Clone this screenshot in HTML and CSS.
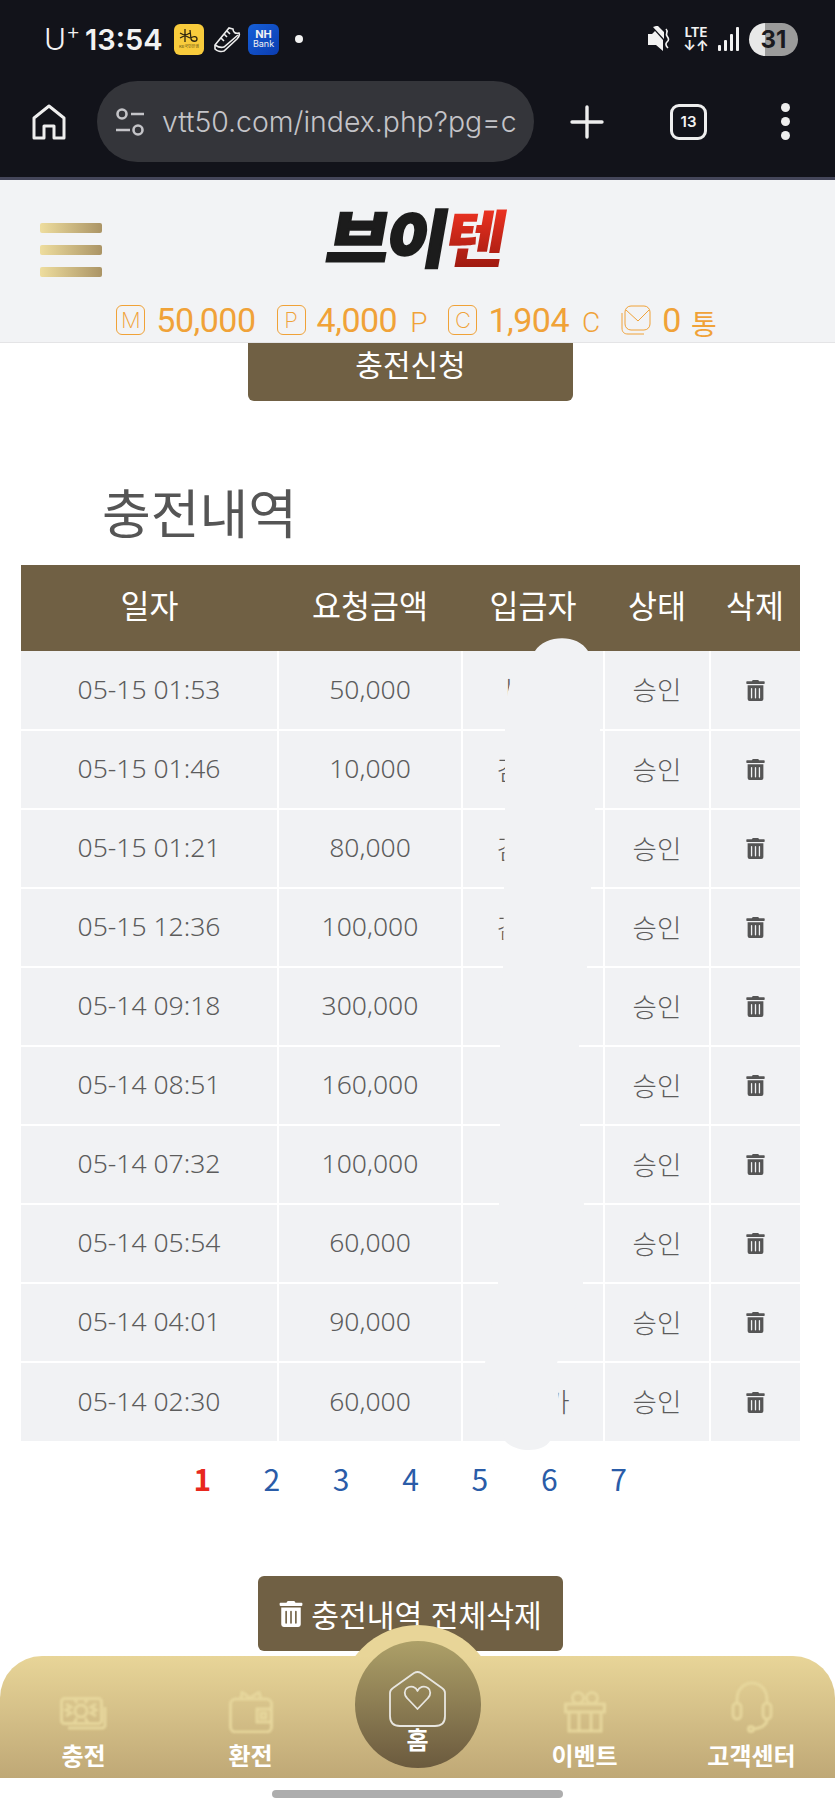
FILE: index.html
```html
<!DOCTYPE html>
<html lang="ko">

<head>
  <meta charset="UTF-8">
  <meta name="viewport" content="width=device-width, initial-scale=1.0">
  <title>충전내역</title>
  <link rel="stylesheet" href="styles.css">
</head>

<body>
  <svg class="defs">
    <symbol id="trash" viewBox="0 0 448 512">
      <path fill="currentColor" d="M32 464a48 48 0 0 0 48 48h288a48 48 0 0 0 48-48V128H32zm272-256a16 16 0 0 1 32 0v224a16 16 0 0 1-32 0zm-96 0a16 16 0 0 1 32 0v224a16 16 0 0 1-32 0zm-96 0a16 16 0 0 1 32 0v224a16 16 0 0 1-32 0zM432 32H312l-9.4-18.7A24 24 0 0 0 281.1 0H166.8a23.72 23.72 0 0 0-21.4 13.3L136 32H16A16 16 0 0 0 0 48v32a16 16 0 0 0 16 16h416a16 16 0 0 0 16-16V48a16 16 0 0 0-16-16z" />
    </symbol>
  </svg>

  <!-- phone status bar + browser toolbar -->
  <div class="chrome">
    <div class="status-bar">
      <span class="carrier">U<sup>+</sup></span>
      <span class="clock">13:54</span>
      <span class="app-kb">
        <svg width="20" height="14" viewBox="0 0 20 14" fill="none" stroke="#2b2410" stroke-width="1.3">
          <path d="M1 4l10 5M1 9l10-5M6 0v13M11 1l1 9c1 3 6 3 6 0s-4-3-6-1" />
        </svg>
        <small>KB국민은행</small>
      </span>
      <svg class="app-shoe" width="28" height="28" viewBox="0 0 28 28" fill="none" stroke="#eee" stroke-width="1.6">
        <path d="M2 20L16 3l4 1c0 3 2 5 6 4 1 2 0 4-2 6L11 26c-3 1-7 0-9-2z" />
        <path d="M2 20c3 2 6 3 9 2L25 10M11 9l3 3M14 6l3 3M8 13l3 3" />
      </svg>
      <span class="app-nh"><b>NH</b><small>Bank</small></span>
      <span class="dot"></span>

      <div class="status-right">
        <svg width="22" height="26" viewBox="0 0 22 26" fill="#f2f2f2">
          <path d="M0 8h4l3-3 8 9v11l-7-6H0zM5 1l11 12v-7L10 0H8z" />
          <path d="M18 3c3 3-1 4 1 7s2 4 0 6-1 4 1 6" fill="none" stroke="#f2f2f2" stroke-width="1.6" />
        </svg>
        <span class="lte">LTE<i>↓↑</i></span>
        <svg width="22" height="24" viewBox="0 0 22 24" fill="#f2f2f2">
          <rect x="0" y="18" width="3" height="6" rx="1" />
          <rect x="6" y="13" width="3" height="11" rx="1" />
          <rect x="12" y="7" width="3" height="17" rx="1" />
          <rect x="18" y="0" width="3" height="24" rx="1" />
        </svg>
        <span class="battery">31</span>
      </div>
    </div>

    <div class="toolbar">
      <svg class="tool-home" width="34" height="36" viewBox="0 0 34 36" fill="none" stroke="#eee" stroke-width="3">
        <path d="M2 34V14L17 2l15 12v20H22V22H12v12z" stroke-linejoin="round" />
      </svg>
      <div class="url-bar">
        <svg width="30" height="30" viewBox="0 0 30 30" fill="none" stroke="#c4c4c8" stroke-width="2.6">
          <circle cx="7" cy="7" r="4.5" />
          <circle cx="23" cy="23" r="4.5" />
          <path d="M16 7h13M1 23h14" />
        </svg>
        <span>vtt50.com/index.php?pg=c</span>
      </div>
      <svg class="tool-plus" width="34" height="34" viewBox="0 0 34 34" stroke="#eee" stroke-width="3.4" stroke-linecap="round">
        <path d="M17 2v30M2 17h30" />
      </svg>
      <span class="tab-count">13</span>
      <span class="tool-more"><i></i><i></i><i></i></span>
    </div>
  </div>

  <header class="site-header">
    <div class="header-top">
      <div class="hamburger"><span></span><span></span><span></span></div>
      <div class="logo">브이<span>텐</span></div>
    </div>
    <div class="points">
      <div class="point">
        <span class="point-box">M</span>
        <b>50,000</b>
      </div>
      <div class="point">
        <span class="point-box">P</span>
        <b>4,000</b><em>P</em>
      </div>
      <div class="point">
        <span class="point-box">C</span>
        <b>1,904</b><em>C</em>
      </div>
      <div class="point">
        <svg width="30" height="30" viewBox="0 0 30 30" fill="none" stroke="#f0a238" stroke-width="1">
          <rect x="4" y="1" width="25" height="24" rx="6" />
          <path d="M5 5l12 11L28 5" />
          <path d="M1 8v15c0 4 2 6 6 6h16" />
        </svg>
        <b>0</b><em class="unit">통</em>
      </div>
    </div>
  </header>

  <main>
    <div class="request-wrap">
      <button class="request-btn">충전신청</button>
    </div>

    <h2 class="page-title">충전내역</h2>

    <div class="history">
      <table>
        <thead>
          <tr>
            <th class="col-date">일자</th>
            <th class="col-amount">요청금액</th>
            <th class="col-name">입금자</th>
            <th class="col-state">상태</th>
            <th class="col-del">삭제</th>
          </tr>
        </thead>
        <tbody>
          <tr><td>05-15 01:53</td><td>50,000</td><td>ㅣㅇㅇ</td><td>승인</td><td><svg class="trash"><use href="#trash" /></svg></td></tr>
          <tr><td>05-15 01:46</td><td>10,000</td><td>김ㅇㅇ</td><td>승인</td><td><svg class="trash"><use href="#trash" /></svg></td></tr>
          <tr><td>05-15 01:21</td><td>80,000</td><td>김ㅇㅇ</td><td>승인</td><td><svg class="trash"><use href="#trash" /></svg></td></tr>
          <tr><td>05-15 12:36</td><td>100,000</td><td>김ㅇㅇ</td><td>승인</td><td><svg class="trash"><use href="#trash" /></svg></td></tr>
          <tr><td>05-14 09:18</td><td>300,000</td><td></td><td>승인</td><td><svg class="trash"><use href="#trash" /></svg></td></tr>
          <tr><td>05-14 08:51</td><td>160,000</td><td></td><td>승인</td><td><svg class="trash"><use href="#trash" /></svg></td></tr>
          <tr><td>05-14 07:32</td><td>100,000</td><td></td><td>승인</td><td><svg class="trash"><use href="#trash" /></svg></td></tr>
          <tr><td>05-14 05:54</td><td>60,000</td><td></td><td>승인</td><td><svg class="trash"><use href="#trash" /></svg></td></tr>
          <tr><td>05-14 04:01</td><td>90,000</td><td></td><td>승인</td><td><svg class="trash"><use href="#trash" /></svg></td></tr>
          <tr><td>05-14 02:30</td><td>60,000</td><td>ㅇㅇ가</td><td>승인</td><td><svg class="trash"><use href="#trash" /></svg></td></tr>
        </tbody>
      </table>

      <!-- painted-over names in the depositor column -->
      <svg class="smear" viewBox="0 0 779 900" width="779" height="900">
        <path fill="#f1f2f4" d="M484 166C484 130 486 108 514 86C524 70 556 68 567 86C578 100 580 130 579 166L574 244L566 403L558 482L559 561L563 640L562 719L536 798L538 840L529 876C522 888 495 888 484 876L464 798L477 719L478 640L479 561L479 482L482 403L484 244Z" />
      </svg>
    </div>

    <nav class="pagination">
      <a class="current">1</a>
      <a>2</a>
      <a>3</a>
      <a>4</a>
      <a>5</a>
      <a>6</a>
      <a>7</a>
    </nav>

    <div class="delete-wrap">
      <button class="delete-btn"><svg class="trash-lg"><use href="#trash" /></svg>충전내역 전체삭제</button>
    </div>
  </main>

  <!-- bottom tab bar -->
  <div class="tabbar">
    <a class="tab">
      <svg class="tab-icon" width="48" height="36" viewBox="0 0 48 36" fill="none" stroke-width="3">
        <path d="M8 31h34a3 3 0 0 0 3-3V10" />
        <rect x="1.500" y="1.500" width="40" height="25" rx="3" />
        <circle cx="21" cy="14" r="6" />
        <path d="M6 7l5 3-5 3 5 3-5 3M36 7l-5 3 5 3-5 3 5 3M14 1l3 5M28 1l-3 5M14 26l3-5M28 26l-3-5" />
      </svg>
      <span>충전</span>
    </a>
    <a class="tab">
      <svg class="tab-icon" width="44" height="42" viewBox="0 0 44 42" fill="none" stroke-width="3">
        <rect x="1.500" y="8" width="41" height="33" rx="5" />
        <path d="M12 8L13 1l8 6 9-6 2 7" />
        <rect x="28" y="18" width="14" height="13" />
        <rect x="32" y="22" width="5" height="5" />
      </svg>
      <span>환전</span>
    </a>
    <a class="tab tab-home">
      <span class="home-circle">
        <svg width="57" height="56" viewBox="0 0 57 56" fill="none" stroke="#e8e6e0" stroke-width="1.8" stroke-linejoin="round">
          <path d="M1 22q0-3 3-5L25 2q3.500-2 7 0L53 17q3 2 3 5V45q0 10-10 10H11Q1 55 1 45z" />
          <path d="M28.500 38L18 27c-3-3-3-8 0-10 4-3 9-1 10.500 3 1.500-4 6.500-6 10.500-3 3 2 3 7 0 10z" />
        </svg>
        <span>홈</span>
      </span>
    </a>
    <a class="tab">
      <svg class="tab-icon" width="42" height="42" viewBox="0 0 42 42" fill="none" stroke-width="3">
        <circle cx="14" cy="7" r="5.500" />
        <circle cx="28" cy="7" r="5.500" />
        <rect x="1.500" y="13" width="39" height="8" />
        <path d="M5 21v19h32V21M15 21v19M27 21v19" />
      </svg>
      <span>이벤트</span>
    </a>
    <a class="tab">
      <svg class="tab-icon" width="42" height="52" viewBox="0 0 42 52" fill="none" stroke-width="3">
        <path d="M6 22V19C6 8 13 2 21 2s15 6 15 17v3" />
        <rect x="2" y="22" width="8" height="16" rx="4" />
        <rect x="32" y="22" width="8" height="16" rx="4" />
        <path d="M36 38c0 6-6 9-13 10" />
        <circle cx="20" cy="48" r="2.500" />
      </svg>
      <span>고객센터</span>
    </a>
  </div>
  <div class="home-indicator"></div>
</body>

</html>
```

FILE: styles.css
```css
* {
  box-sizing: border-box;
}

body {
  position: relative;
  width: 835px;
  height: 1809px;
  margin: 0;
  overflow: hidden;
  background-color: #fff;
  font-family: "Noto Sans CJK KR", "Noto Sans", sans-serif;
}

.defs {
  display: none;
}

/* ---- phone chrome ---- */
.chrome {
  height: 180px;
  background-color: #12131a;
  border-bottom: 3px solid #44465a;
  font-family: Inter, sans-serif;
  color: #f2f2f2;
}

.status-bar {
  display: flex;
  align-items: center;
  height: 72px;
  padding: 6px 37px 0 44px;
}

.carrier {
  width: 41px;
  font-size: 30px;
  font-weight: 300;
}

.carrier sup {
  font-size: 22px;
  line-height: 0;
}

.clock {
  width: 89px;
  font-size: 29px;
  font-weight: 600;
}

.app-kb {
  display: flex;
  flex-direction: column;
  align-items: center;
  justify-content: center;
  width: 30px;
  height: 31px;
  background-color: #f8cb3c;
  border-radius: 6px;
}

.app-kb small {
  font-size: 4px;
  line-height: 6px;
  color: #5a4a10;
  font-family: "Noto Sans CJK KR", sans-serif;
}

.app-shoe {
  margin: 0 7px 0 9px;
}

.app-nh {
  display: flex;
  flex-direction: column;
  align-items: center;
  justify-content: center;
  width: 31px;
  height: 31px;
  background: linear-gradient(135deg, #1660d8, #0b3cb0);
  border-radius: 6px;
  line-height: 10px;
}

.app-nh b {
  font-size: 11px;
  font-weight: 700;
}

.app-nh small {
  font-size: 9px;
}

.dot {
  width: 8px;
  height: 8px;
  margin-left: 16px;
  background-color: #f2f2f2;
  border-radius: 50%;
}

.status-right {
  display: flex;
  align-items: center;
  margin-left: auto;
}

.lte {
  display: flex;
  flex-direction: column;
  align-items: center;
  width: 26px;
  margin: 0 9px 0 13px;
  font-size: 13px;
  font-weight: 700;
  line-height: 13px;
}

.lte i {
  font-style: normal;
  font-size: 14px;
  line-height: 13px;
}

.battery {
  width: 49px;
  height: 33px;
  margin-left: 9px;
  background: linear-gradient(90deg, #e8e8e8 32%, #9b9b9b 32%);
  border-radius: 17px;
  color: #1a1a20;
  font-size: 24px;
  font-weight: 700;
  line-height: 33px;
  text-align: center;
}

.toolbar {
  display: flex;
  align-items: center;
  height: 99px;
  padding-left: 32px;
}

.url-bar {
  display: flex;
  align-items: center;
  width: 437px;
  height: 81px;
  margin-left: 31px;
  padding-left: 18px;
  background-color: #34353a;
  border-radius: 41px;
  color: #c4c4c8;
  font-size: 28.400px;
  font-weight: 300;
  white-space: nowrap;
}

.url-bar span {
  margin-left: 17px;
}

.tool-plus {
  margin-left: 36px;
}

.tab-count {
  width: 37px;
  height: 36px;
  margin-left: 66px;
  border: 3px solid #eee;
  border-radius: 9px;
  font-size: 15px;
  font-weight: 600;
  line-height: 30px;
  text-align: center;
}

.tool-more {
  display: flex;
  flex-direction: column;
  gap: 5px;
  margin-left: 74px;
}

.tool-more i {
  width: 9px;
  height: 9px;
  background-color: #eee;
  border-radius: 50%;
}

/* ---- site header ---- */
.site-header {
  height: 163px;
  background-color: #f2f3f5;
  border-bottom: 1px solid #e4e4e6;
}

.header-top {
  display: grid;
  grid-template-columns: 1fr auto 1fr;
  align-items: center;
  height: 116px;
  padding-left: 40px;
}

.hamburger {
  display: flex;
  flex-direction: column;
  gap: 12px;
  width: 62px;
  margin-top: 23px;
}

.hamburger span {
  height: 10px;
  background: linear-gradient(90deg, #eedd9e, #ab9465);
  border-radius: 2px;
}

.logo {
  margin-left: -41px;
  margin-top: -7px;
  color: #1c1c1c;
  font-size: 67px;
  font-weight: 900;
  line-height: 70px;
  letter-spacing: -3px;
  white-space: nowrap;
  transform: skewX(-10deg) scaleY(.93);
  -webkit-text-stroke: 2.5px #1c1c1c;
}

.logo span {
  background: linear-gradient(180deg, #ee3322 20%, #a01a10 85%);
  -webkit-background-clip: text;
  background-clip: text;
  -webkit-text-fill-color: transparent;
  -webkit-text-stroke: 0;
}

.points {
  display: flex;
  justify-content: center;
  gap: 21px;
  margin-top: 9px;
  padding-right: 2px;
  color: #f0a238;
}

.point {
  display: flex;
  align-items: center;
  height: 30px;
}

.point b {
  margin-left: 11px;
  font-family: Roboto, sans-serif;
  font-size: 34px;
  font-weight: 400;
  letter-spacing: -.5px;
  line-height: 30px;
}

.point em {
  margin-left: 13px;
  margin-top: 6px;
  font-family: Roboto, sans-serif;
  font-size: 28px;
  font-style: normal;
  font-weight: 300;
  line-height: 30px;
}

.point em.unit {
  margin-left: 10px;
  margin-top: 5px;
  font-family: "Noto Sans CJK KR", sans-serif;
  font-size: 28px;
  font-weight: 400;
}

.point-box {
  width: 29px;
  height: 30px;
  border: 1px solid #f0a238;
  border-radius: 6px;
  font-family: Inter, sans-serif;
  font-size: 22px;
  font-weight: 200;
  line-height: 28px;
  text-align: center;
}

/* ---- main ---- */
.request-wrap {
  display: flex;
  justify-content: center;
  padding-right: 14px;
}

button {
  border: none;
  background-color: #706044;
  color: #fff;
  font-family: inherit;
}

.request-btn {
  width: 325px;
  height: 58px;
  padding: 0 0 20px;
  border-radius: 0 0 6px 6px;
  font-size: 30px;
  line-height: 40px;
}

.page-title {
  margin: 80px 0 24px;
  padding-left: 102px;
  color: #555;
  font-size: 53px;
  font-weight: 400;
  line-height: 60px;
}

.history {
  position: relative;
  width: 779px;
  margin-left: 21px;
}

table {
  width: 779px;
  border-collapse: collapse;
  table-layout: fixed;
}

th {
  height: 86px;
  padding: 0 0 8px;
  background-color: #706044;
  color: #fff;
  font-size: 31.500px;
  font-weight: 400;
}

td {
  height: 79px;
  padding: 0 0 3px;
  background-color: #f1f2f4;
  border-right: 2px solid #fff;
  border-bottom: 2px solid #fff;
  color: #5c5c5c;
  font-family: "Noto Sans", "Noto Sans CJK KR", sans-serif;
  font-size: 26.500px;
  font-weight: 300;
  text-align: center;
}

td:last-child {
  border-right: none;
}

tr:last-child td {
  border-bottom: none;
}

.col-date {
  width: 257px;
}

.col-amount {
  width: 184px;
}

.col-name {
  width: 142px;
}

.col-state {
  width: 106px;
}

.trash {
  display: block;
  width: 19px;
  height: 21px;
  margin: 3px auto 0;
  color: #555;
}

.smear {
  position: absolute;
  top: 0;
  left: 0;
  overflow: visible;
}

.pagination {
  display: flex;
  justify-content: center;
  align-items: center;
  height: 80px;
  padding: 0 14px 6px 0;
}

.pagination a {
  width: 69.400px;
  color: #2a5ca8;
  font-size: 30px;
  text-align: center;
}

.pagination a.current {
  color: #e8281e;
  font-weight: 700;
}

.delete-wrap {
  display: flex;
  justify-content: center;
  margin-top: 55px;
  padding-right: 14px;
}

.delete-btn {
  display: flex;
  align-items: center;
  justify-content: center;
  gap: 8px;
  width: 305px;
  height: 75px;
  border-radius: 6px;
  font-size: 30.200px;
}

.trash-lg {
  width: 24px;
  height: 26px;
  color: #fff;
}

/* ---- bottom tab bar ---- */
.tabbar {
  position: absolute;
  left: 0;
  right: 0;
  bottom: 31px;
  display: flex;
  height: 122px;
  background: linear-gradient(180deg, #e8d598, #bfa876);
  border-radius: 42px 42px 0 0;
}

.tab {
  display: flex;
  flex: 1;
  flex-direction: column;
  align-items: center;
  justify-content: flex-end;
  gap: 6px;
  padding-bottom: 7px;
  color: #fff;
  font-size: 24px;
  font-weight: 700;
  line-height: 32px;
}

.tab-icon {
  stroke: #e6d69c;
  filter: blur(1px);
}

.tab-home {
  position: relative;
}

.tab-home::before {
  content: "";
  position: absolute;
  top: -31px;
  left: 4.500px;
  width: 158px;
  height: 158px;
  background-color: #e8d598;
  border-radius: 50%;
  clip-path: inset(0 0 126px 0);
}

.home-circle {
  position: absolute;
  top: -15px;
  left: 20.500px;
  display: flex;
  flex-direction: column;
  align-items: center;
  width: 126px;
  height: 127px;
  padding-top: 30px;
  background: linear-gradient(180deg, #ada068, #6b5a3e);
  border-radius: 50%;
  line-height: 24px;
}

.home-indicator {
  position: absolute;
  left: 272px;
  bottom: 11px;
  width: 291px;
  height: 8px;
  background-color: #adadad;
  border-radius: 4px;
}
```
